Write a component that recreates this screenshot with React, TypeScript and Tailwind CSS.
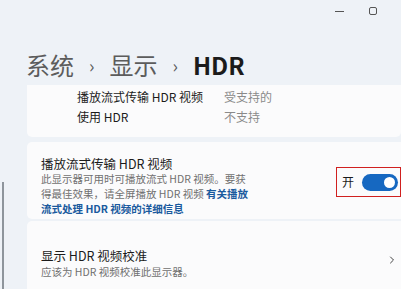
import { ChevronRight } from 'lucide-react'

const font = '"Noto Sans CJK SC", "Noto Sans", sans-serif'

function InfoRow({ label, value }: { label: string; value: string }) {
  return (
    <div className="flex items-center h-[20px]">
      <span className="w-[147px] text-[12px] text-[#1b1b1b]">{label}</span>
      <span className="text-[12px] text-[#8a8a8a]">{value}</span>
    </div>
  )
}

export default function App() {
  return (
    <div
      className="relative w-[401px] h-[289px] overflow-hidden bg-[#eef2f7]"
      style={{ fontFamily: font }}
    >
      {/* window controls */}
      <div className="flex justify-end items-center h-[22px] pr-[24px] gap-[25px]">
        <div className="w-[9px] h-[1px] bg-[#555]" />
        <div className="w-[8px] h-[8px] border border-[#555] rounded-[2px]" />
      </div>

      {/* breadcrumb */}
      <div className="flex items-center h-[40px] mt-[23px] pl-[26px] text-[24px] leading-none">
        <span className="text-[#5c5c5c]">系统</span>
        <span className="text-[#5c5c5c] text-[18px] mx-[15px]">›</span>
        <span className="text-[#5c5c5c]">显示</span>
        <span className="text-[#5c5c5c] text-[18px] mx-[15px]">›</span>
        <span className="text-[#1b1b1b] font-semibold">HDR</span>
      </div>

      {/* scrollbar of the nav pane */}
      <div className="absolute left-[2px] top-[182px] w-[2px] h-[120px] bg-[#8e959c]" />

      <div className="flex flex-col ml-[27px]">
        {/* display capabilities (scrolled) */}
        <div className="bg-[#fbfbfc] rounded-b-[5px] pl-[50px] pt-[2px] pb-[10px]">
          <InfoRow label="播放流式传输 HDR 视频" value="受支持的" />
          <InfoRow label="使用 HDR" value="不支持" />
        </div>

        {/* streaming HDR toggle */}
        <div className="flex items-start bg-[#fbfbfc] rounded-l-[5px] h-[77px] mt-[5px] pl-[14px] pt-[15px]">
          <div className="w-[215px] flex flex-col">
            <span className="text-[12.5px] leading-[14px] text-[#1b1b1b]">播放流式传输 HDR 视频</span>
            <p className="text-[10.5px] leading-[15px] text-[#707070]">
              此显示器可用时可播放流式 HDR 视频。要获得最佳效果，请全屏播放 HDR 视频{' '}
              <span className="text-[#1a5a9e] font-semibold">有关播放流式处理 HDR 视频的详细信息</span>
            </p>
          </div>
          <div className="flex items-center gap-[8px] ml-auto mt-[10px] h-[30px] w-[65px] pl-[5px] border border-[#d0201f]">
            <span className="text-[12px] text-[#1b1b1b]">开</span>
            <div className="flex items-center justify-end w-[36px] h-[17px] rounded-full bg-[#1668c1] pr-[3px]">
              <div className="w-[11px] h-[11px] rounded-full bg-white" />
            </div>
          </div>
        </div>

        {/* calibration */}
        <div className="flex items-start bg-[#fbfbfc] rounded-l-[5px] h-[90px] mt-[2px] pl-[14px] pt-[27px]">
          <div className="flex flex-col">
            <span className="text-[12.5px] leading-[16px] text-[#1b1b1b]">显示 HDR 视频校准</span>
            <span className="text-[10.5px] leading-[15px] text-[#707070]">应该为 HDR 视频校准此显示器。</span>
          </div>
          <ChevronRight className="ml-auto mr-[3px] mt-[6px] w-[12px] h-[12px] text-[#444]" strokeWidth={2} />
        </div>
      </div>
    </div>
  )
}
